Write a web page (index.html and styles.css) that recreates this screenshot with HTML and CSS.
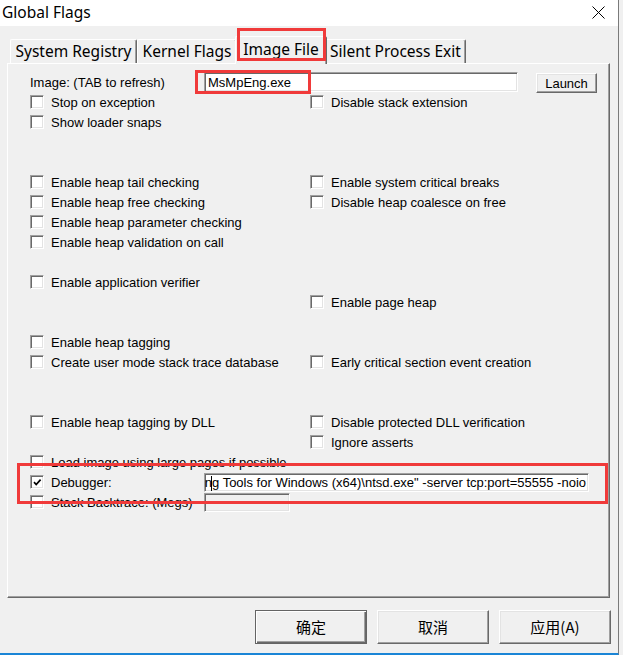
FILE: index.html
```html
<!DOCTYPE html>
<html>
<head>
<meta charset="utf-8">
<title>Global Flags</title>
<link rel="stylesheet" href="styles.css">
</head>
<body>
<div class="window">
  <div class="titlebar">
    <span class="title">Global Flags</span>
    <svg class="close" width="13" height="13" viewBox="0 0 13 13"><path d="M0.5 0.5L12.5 12.5M12.5 0.5L0.5 12.5" stroke="#000" stroke-width="1" fill="none"/></svg>
  </div>
  <div class="client">
    <div class="tabs">
      <div class="tab t-sr">System Registry</div>
      <div class="tab t-kf">Kernel Flags</div>
      <div class="tab t-if active">Image File</div>
      <div class="tab t-spe">Silent Process Exit</div>
      <div class="mark mark-tab"></div>
    </div>
    <div class="panel">
      <div class="grid">
        <div class="wide-row">
          <span class="lead">Image: (TAB to refresh)</span>
          <div class="edit edit-image">MsMpEng.exe</div>
          <div class="btn btn-launch">Launch</div>
        </div>
        <div class="cb"><span class="box"></span>Stop on exception</div>
        <div class="cb"><span class="box"></span>Disable stack extension</div>
        <div class="cb"><span class="box"></span>Show loader snaps</div>
        <div></div>
        <div class="empty-row"></div>
        <div class="empty-row"></div>
        <div class="cb"><span class="box"></span>Enable heap tail checking</div>
        <div class="cb"><span class="box"></span>Enable system critical breaks</div>
        <div class="cb"><span class="box"></span>Enable heap free checking</div>
        <div class="cb"><span class="box"></span>Disable heap coalesce on free</div>
        <div class="cb"><span class="box"></span>Enable heap parameter checking</div>
        <div></div>
        <div class="cb"><span class="box"></span>Enable heap validation on call</div>
        <div></div>
        <div class="empty-row"></div>
        <div class="cb"><span class="box"></span>Enable application verifier</div>
        <div></div>
        <div></div>
        <div class="cb"><span class="box"></span>Enable page heap</div>
        <div class="empty-row"></div>
        <div class="cb"><span class="box"></span>Enable heap tagging</div>
        <div></div>
        <div class="cb"><span class="box"></span>Create user mode stack trace database</div>
        <div class="cb"><span class="box"></span>Early critical section event creation</div>
        <div class="empty-row"></div>
        <div class="empty-row"></div>
        <div class="cb"><span class="box"></span>Enable heap tagging by DLL</div>
        <div class="cb"><span class="box"></span>Disable protected DLL verification</div>
        <div></div>
        <div class="cb"><span class="box"></span>Ignore asserts</div>
        <div class="cb"><span class="box"></span>Load image using large pages if possible</div>
        <div></div>
        <div class="wide-row">
          <div class="cb lead"><span class="box"><svg class="check" width="9" height="9" viewBox="0 0 9 9"><path d="M1 4.2L3.2 6.5L7.6 1.6" stroke="#000" stroke-width="1.7" fill="none"/></svg></span>Debugger:</div>
          <div class="edit edit-dbg"><span class="dbg-text">"C:\Program Files\Debugging Tools for Windows (x64)\ntsd.exe" -server tcp:port=55555 -noio</span><span class="caret"></span></div>
        </div>
        <div class="wide-row">
          <div class="cb lead"><span class="box"></span>Stack Backtrace: (Megs)</div>
          <div class="edit edit-stack"></div>
        </div>
      </div>
      <div class="mark mark-image"></div>
      <div class="mark mark-dbg"></div>
    </div>
    <div class="buttons">
      <div class="btn btn-big btn-default">确定</div>
      <div class="btn btn-big">取消</div>
      <div class="btn btn-big">应用(A)</div>
    </div>
  </div>
</div>
</body>
</html>
```

FILE: styles.css
```css
* { box-sizing: border-box; }
html, body { margin: 0; padding: 0; }
body {
  width: 623px;
  height: 655px;
  overflow: hidden;
  background: #f0f0f0;
  font-family: "Liberation Sans", Arial, sans-serif;
  font-size: 13px;
  color: #000;
}
.window {
  width: 619px;
  height: 655px;
  background: #f0f0f0;
  border-right: 1px solid #7a7a7a;
  border-bottom: 2px solid #1a85d6;
  display: flex;
  flex-direction: column;
}
.titlebar {
  height: 26px;
  flex: none;
  background: #fff;
  display: flex;
  align-items: center;
  justify-content: space-between;
  padding: 0 13px 3px 2px;
  font-family: "Noto Sans", sans-serif;
  font-size: 15.5px;
}
.close { display: block; margin-top: 2px; }
.client { flex: 1; display: flex; flex-direction: column; }

.tabs {
  position: relative;
  height: 37px;
  flex: none;
  display: flex;
  align-items: flex-end;
  padding-left: 10px;
  font-family: "Noto Sans", sans-serif;
  font-size: 15.5px;
}
.tab {
  height: 24px;
  display: flex;
  align-items: center;
  justify-content: center;
  white-space: nowrap;
  background: #f0f0f0;
  border-top: 1px solid #fff;
  border-left: 1px solid #fff;
  border-right: 1px solid #696969;
  box-shadow: inset -1px 0 #a0a0a0;
  border-radius: 2px 2px 0 0;
  padding-bottom: 1px;
}
.t-sr { width: 127px; }
.t-kf { width: 100px; }
.t-if { width: 92px; }
.t-spe { width: 141px; }
.tab.active {
  height: 28px;
  margin: 0 -2px -1px;
  position: relative;
  z-index: 1;
  padding-bottom: 4px;
}

.panel {
  position: relative;
  margin-left: 7px;
  width: 603px;
  height: 535px;
  flex: none;
  border-top: 1px solid #fff;
  border-left: 1px solid #fff;
  border-right: 1px solid #696969;
  border-bottom: 1px solid #696969;
  box-shadow: inset -1px -1px #a0a0a0;
}
.grid {
  display: grid;
  grid-template-columns: 280px 1fr;
  grid-auto-rows: 20px;
  padding: 8px 0 0 22px;
}
.empty-row { grid-column: 1 / -1; }
.wide-row {
  grid-column: 1 / -1;
  display: flex;
  align-items: center;
}
.lead { width: 174px; flex: none; white-space: nowrap; }

.cb {
  display: flex;
  align-items: center;
  gap: 8px;
  white-space: nowrap;
}
.box {
  position: relative;
  width: 14px;
  height: 14px;
  flex: none;
  background: #fff;
  border: 1px solid;
  border-color: #a0a0a0 #fff #fff #a0a0a0;
  box-shadow: inset 1px 1px #696969, inset -1px -1px #e3e3e3;
  margin-right: -1px;
}
.check { position: absolute; left: 2px; top: 2px; }

.edit {
  position: relative;
  background: #fff;
  border: 1px solid;
  border-color: #a0a0a0 #fff #fff #a0a0a0;
  box-shadow: inset 1px 1px #696969, inset -1px -1px #e3e3e3;
  display: flex;
  align-items: center;
  padding-left: 3px;
  white-space: nowrap;
  overflow: hidden;
}
.edit-image { width: 314px; height: 20px; }
.edit-dbg {
  width: 385px;
  height: 19px;
  justify-content: flex-end;
  padding: 0 2px 0 0;
}
.dbg-text { flex: none; }
.caret {
  position: absolute;
  left: 6px;
  top: 2px;
  width: 1px;
  height: 15px;
  background: #000;
}
.edit-stack { width: 86px; height: 19px; background: #f0f0f0; margin-top: 1px; }

.btn {
  display: flex;
  align-items: center;
  justify-content: center;
  background: #f0f0f0;
  border: 1px solid;
  border-color: #fff #696969 #696969 #fff;
  box-shadow: inset -1px -1px #a0a0a0, inset 1px 1px #e3e3e3;
}
.btn-launch { width: 61px; height: 20px; margin-left: 18px; margin-top: 2px; }

.buttons {
  display: flex;
  gap: 10px;
  padding: 12px 0 0 255px;
}
.btn-big {
  width: 112px;
  height: 34px;
  font-family: "Noto Sans CJK SC", sans-serif;
  font-size: 15px;
  padding-bottom: 1px;
}
.btn-default {
  border: 1px solid #646464;
  box-shadow: inset 1px 1px #fff, inset -1px -1px #696969, inset -2px -2px #a0a0a0;
}

.mark {
  position: absolute;
  border: 3px solid #f03a3a;
  pointer-events: none;
}
.mark-tab { left: 237px; top: 2px; width: 89px; height: 33px; z-index: 2; }
.mark-image { left: 187px; top: 6px; width: 116px; height: 24px; }
.mark-dbg { left: 9px; top: 399px; width: 591px; height: 41px; }
```
